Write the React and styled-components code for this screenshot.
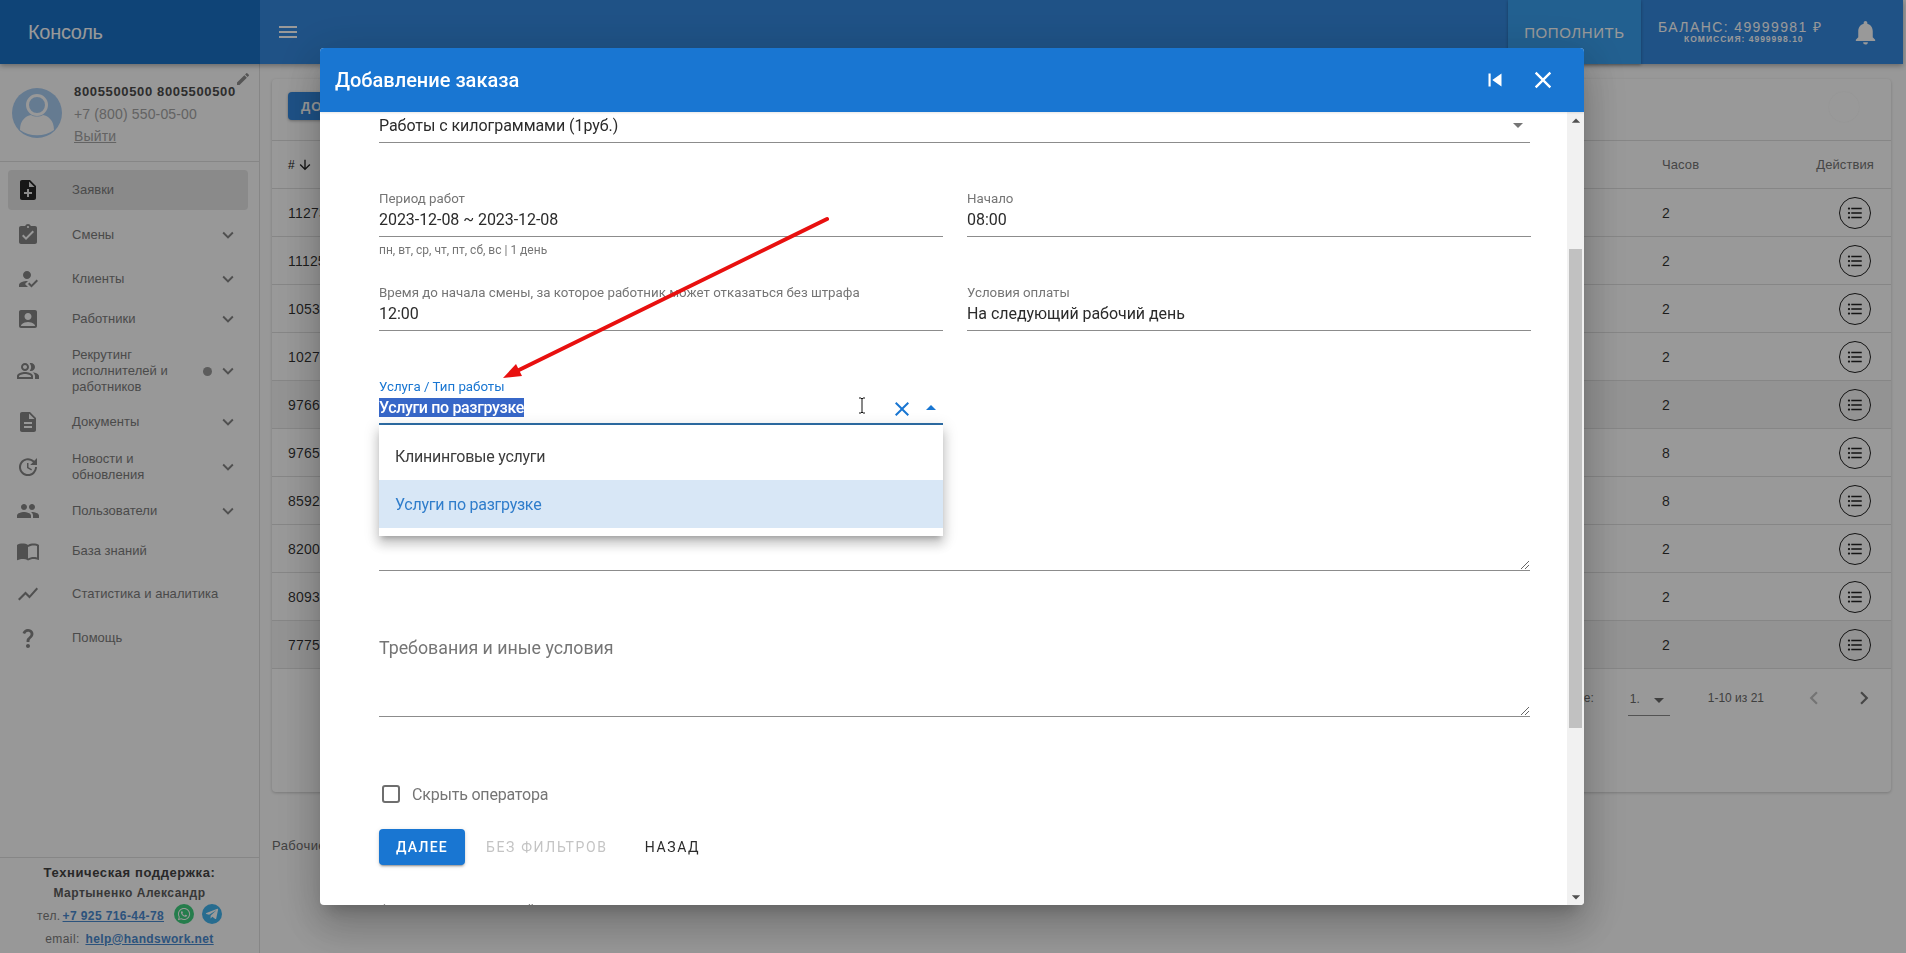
import React from 'react';
import styled, { createGlobalStyle } from 'styled-components';
import {
  MdNoteAdd,
  MdAssignmentTurnedIn,
  MdHowToReg,
  MdAccountBox,
  MdOutlinePeopleAlt,
  MdDescription,
  MdUpdate,
  MdPeople,
  MdImportContacts,
  MdShowChart,
  MdQuestionMark,
  MdExpandMore,
  MdEdit,
  MdMenu,
  MdNotifications,
  MdArrowDownward,
  MdFormatListBulleted,
  MdChevronLeft,
  MdChevronRight,
  MdClose,
  MdSkipPrevious,
  MdArrowDropDown,
  MdArrowDropUp,
} from 'react-icons/md';
import { FaWhatsapp, FaTelegramPlane } from 'react-icons/fa';

const GlobalStyle = createGlobalStyle`
  html, body {
    margin: 0;
    height: 100%;
    overflow: hidden;
    background: #fdfdfd;
    font-family: "Liberation Sans", Arial, sans-serif;
  }
  * {
    box-sizing: border-box;
  }
`;

const Shell = styled.div`
  width: 1903px;
  height: 953px;
  display: grid;
  grid-template-columns: 260px 1fr;
  grid-template-rows: 64px 1fr;
`;

const TopBar = styled.header`
  grid-column: 1 / 3;
  display: flex;
  align-items: stretch;
  background: #3489df;
  color: #fff;
  box-shadow: 0 2px 5px rgba(0, 0, 0, 0.3);
  z-index: 2;
`;

const Brand = styled.div`
  width: 260px;
  display: flex;
  align-items: center;
  padding-left: 28px;
  font-size: 20px;
  letter-spacing: -0.3px;
  background: #1a72c6;
`;

const MenuButton = styled.div`
  display: flex;
  align-items: center;
  margin-left: 16px;
  font-size: 24px;
  flex: 1;
`;

const TopUp = styled.div`
  width: 133px;
  display: flex;
  align-items: center;
  justify-content: center;
  font-size: 15px;
  letter-spacing: 0.6px;
  background: #39a0f0;
  box-shadow: 0 1px 3px rgba(0, 0, 0, 0.3);
`;

const Balance = styled.div`
  width: 190px;
  padding-left: 17px;
  display: flex;
  flex-direction: column;
  align-items: flex-start;
  justify-content: center;
  font-size: 14px;
  letter-spacing: 1.4px;
  line-height: 15px;
`;

const Commission = styled.div`
  align-self: flex-start;
  margin-left: 26px;
  font-size: 8.5px;
  font-weight: 700;
  line-height: 9px;
  letter-spacing: 1px;
`;

const BellBox = styled.div`
  width: 72px;
  padding-left: 20px;
  display: flex;
  align-items: center;
  font-size: 29px;
`;

const Sidebar = styled.aside`
  display: flex;
  flex-direction: column;
  border-right: 1px solid #e0e0e0;
  color: #7c7c7c;
`;

const Profile = styled.div`
  position: relative;
  height: 98px;
  padding: 17px 0 0 12px;
  display: flex;
  gap: 12px;
  border-bottom: 1px solid #e0e0e0;
`;

const Avatar = styled.svg`
  width: 50px;
  height: 50px;
  margin-top: 7px;
  flex: none;
`;

const ProfileText = styled.div`
  display: flex;
  flex-direction: column;
  font-size: 14px;
  line-height: 22px;
  letter-spacing: 0.15px;
  color: #a5a5a5;
`;

const ProfileName = styled.div`
  font-size: 13px;
  font-weight: 700;
  letter-spacing: 0.65px;
  color: #4c4c4c;
`;

const Logout = styled.span`
  text-decoration: underline;
`;

const Pencil = styled.div`
  position: absolute;
  right: 8px;
  top: 7px;
  font-size: 16px;
  color: #8e8e8e;
`;

const Nav = styled.nav`
  padding-top: 8px;
  display: flex;
  flex-direction: column;
`;

const NavItem = styled.div`
  height: ${(p) => p.$h}px;
  margin: 0 11px 0 8px;
  padding-left: 8px;
  display: flex;
  align-items: center;
  border-radius: 4px;
  font-size: 13px;
  line-height: 16px;
  letter-spacing: 0.03px;
  background: ${(p) => (p.$active ? '#e6e6e6' : 'transparent')};
`;

const NavIcon = styled.span`
  width: 24px;
  display: flex;
  justify-content: center;
  font-size: 24px;
  color: ${(p) => (p.$active ? '#262626' : '#858585')};
`;

const NavLabel = styled.span`
  margin-left: 32px;
  max-width: ${(p) => (p.$narrow ? '112px' : 'none')};
`;

const NavDot = styled.span`
  width: 9px;
  height: 9px;
  margin-left: auto;
  margin-right: 5px;
  border-radius: 50%;
  background: #9a9a9a;
`;

const NavChevron = styled.span`
  display: flex;
  margin-left: ${(p) => (p.$afterDot ? '0' : 'auto')};
  margin-right: 9px;
  font-size: 22px;
  color: #858585;
`;

const Support = styled.div`
  margin-top: auto;
  height: 96px;
  padding-top: 6px;
  border-top: 1px solid #e0e0e0;
  text-align: center;
  font-size: 12px;
  letter-spacing: 0.4px;
`;

const SupportTitle = styled.div`
  font-size: 13px;
  font-weight: 700;
  letter-spacing: 0.6px;
  line-height: 18px;
  color: #444;
`;

const SupportName = styled.div`
  font-size: 12px;
  font-weight: 700;
  letter-spacing: 0.5px;
  line-height: 22px;
  color: #5c5c5c;
`;

const SupportLine = styled.div`
  display: flex;
  align-items: center;
  justify-content: center;
  gap: 2px;
  height: 23px;
`;

const SupportLink = styled.a`
  color: #4a8ad0;
  font-weight: 700;
  text-decoration: underline;
`;

const Messenger = styled.span`
  width: 20px;
  height: 20px;
  margin-left: ${(p) => p.$gap}px;
  margin-top: -4px;
  border-radius: 50%;
  display: flex;
  align-items: center;
  justify-content: center;
  color: #fff;
  font-size: 14px;
  background: ${(p) => p.$bg};
`;

const Main = styled.main`
  padding: 15px 12px 0 12px;
  color: #444;
`;

const Card = styled.section`
  height: 713px;
  background: #fff;
  border-radius: 4px;
  box-shadow: 0 1px 3px rgba(0, 0, 0, 0.2);
`;

const CardBar = styled.div`
  height: 62px;
  padding: 13px 32px 0 16px;
  display: flex;
  justify-content: space-between;
  border-bottom: 1px solid #e0e0e0;
`;

const AddButton = styled.div`
  height: 28px;
  padding: 0 13px;
  display: flex;
  align-items: center;
  border-radius: 4px;
  background: #3288e0;
  color: #fff;
  font-size: 13px;
  font-weight: 700;
  letter-spacing: 1px;
  box-shadow: 0 1px 3px rgba(0, 0, 0, 0.3);
`;

const GhostCircle = styled.div`
  width: 30px;
  height: 30px;
  border-radius: 50%;
  background: #fff;
  box-shadow: 0 0 2px rgba(0, 0, 0, 0.05);
`;

const Row = styled.div`
  height: 48px;
  padding: 0 17px 0 16px;
  display: grid;
  grid-template-columns: 1374px 1fr auto;
  align-items: center;
  border-bottom: 1px solid #e0e0e0;
  font-size: 14px;
  letter-spacing: 0.2px;
  color: rgba(0, 0, 0, 0.82);
  background: ${(p) => (p.$shade ? '#f5f5f5' : 'transparent')};

  &:last-of-type {
    height: 50px;
  }
`;

const HeadRow = styled(Row)`
  font-size: 13px;
  letter-spacing: 0.1px;
  color: #757575;
`;

const SortCell = styled.div`
  display: flex;
  align-items: center;
  gap: 2px;
  font-size: 12px;
  color: #222;

  svg {
    font-size: 16px;
  }
`;

const ActionCircle = styled.div`
  width: 32px;
  height: 32px;
  margin-right: 3px;
  border: 1px solid #222;
  border-radius: 50%;
  display: flex;
  align-items: center;
  justify-content: center;
  font-size: 18px;
  color: #222;
`;

const Pager = styled.div`
  height: 58px;
  padding-right: 14px;
  display: flex;
  align-items: center;
  justify-content: flex-end;
  font-size: 12px;
  color: #6a6a6a;
`;

const PagerSelect = styled.div`
  width: 42px;
  height: 33px;
  margin: 0 38px 0 34px;
  padding: 9px 0 0 2px;
  border-bottom: 1px solid #8a8a8a;
  position: relative;
  top: 1px;
  display: flex;
  justify-content: space-between;

  svg {
    font-size: 24px;
    margin-top: -4px;
    margin-right: -1px;
  }
`;

const PagerArrow = styled.span`
  display: flex;
  margin-left: ${(p) => p.$gap}px;
  font-size: 26px;
  color: ${(p) => (p.$off ? '#c2c2c2' : '#757575')};
`;

const PageNote = styled.div`
  margin-top: 46px;
  font-size: 13px;
  letter-spacing: 0.4px;
  color: #6e6e6e;
`;

const Backdrop = styled.div`
  position: fixed;
  inset: 0;
  z-index: 10;
  padding: 48px 0 0 320px;
  background: rgba(0, 0, 0, 0.4);
  font-family: Roboto, "Liberation Sans", sans-serif;
`;

const Dialog = styled.div`
  width: 1264px;
  height: 857px;
  display: flex;
  flex-direction: column;
  overflow: hidden;
  border-radius: 4px;
  background: #fff;
  box-shadow: 0 11px 15px -7px rgba(0, 0, 0, 0.2),
    0 24px 38px 3px rgba(0, 0, 0, 0.14), 0 9px 46px 8px rgba(0, 0, 0, 0.12);
`;

const DialogHead = styled.div`
  height: 64px;
  flex: none;
  padding: 0 27px 0 15px;
  display: flex;
  align-items: center;
  background: #1976d2;
  color: #fff;
  font-size: 20px;
  font-weight: 500;
  box-shadow: 0 1px 2px rgba(0, 0, 0, 0.1);
  z-index: 1;
`;

const DialogTitle = styled.div`
  flex: 1;
`;

const HeadIcon = styled.span`
  display: flex;
  margin-left: ${(p) => p.$gap}px;
  font-size: ${(p) => p.$size}px;
`;

const DialogBody = styled.div`
  flex: 1;
  min-height: 0;
  display: flex;
`;

const Scroller = styled.div`
  flex: 1;
  min-width: 0;
  overflow: hidden;
  padding: 0 37px 0 59px;
`;

const ScrolledForm = styled.div`
  margin-top: -15px;
  display: flex;
  flex-direction: column;
`;

const FieldRow = styled.div`
  display: grid;
  grid-template-columns: 564px 564px;
  column-gap: 24px;
  margin-top: ${(p) => p.$mt || 0}px;
`;

const Field = styled.div`
  position: relative;
  height: 46px;
  display: flex;
  flex-direction: column;
  border-bottom: ${(p) => (p.$focus ? '2px solid #2f6fa8' : '1px solid #8c8c8c')};
`;

const FieldLabel = styled.div`
  height: 16px;
  font-size: 13.3px;
  line-height: 16px;
  color: ${(p) => (p.$focus ? '#1976d2' : '#757575')};
`;

const FieldValue = styled.div`
  height: 24px;
  display: flex;
  align-items: center;
  font-size: 16px;
  letter-spacing: -0.05px;
  color: #2b2b2b;
`;

const SelectedText = styled.span`
  background: #3767c8;
  color: #fff;
  font-weight: 500;
  letter-spacing: -0.35px;
  line-height: 19px;
`;

const FieldEnd = styled.span`
  position: absolute;
  right: ${(p) => p.$right}px;
  bottom: ${(p) => p.$bottom}px;
  display: flex;
  font-size: ${(p) => p.$size}px;
  color: ${(p) => p.$color};
`;

const Hint = styled.div`
  margin-top: 7px;
  font-size: 12px;
  line-height: 12px;
  color: #757575;
`;

const Menu = styled.ul`
  position: absolute;
  left: 0;
  right: 0;
  top: calc(100% + 2px);
  z-index: 3;
  margin: 0;
  padding: 7px 0 8px;
  list-style: none;
  background: #fff;
  box-shadow: 0 5px 5px -3px rgba(0, 0, 0, 0.2), 0 8px 10px 1px rgba(0, 0, 0, 0.14),
    0 3px 14px 2px rgba(0, 0, 0, 0.12);
`;

const MenuItem = styled.li`
  height: 48px;
  padding-left: 16px;
  display: flex;
  align-items: center;
  font-size: 16px;
  letter-spacing: -0.25px;
  color: ${(p) => (p.$selected ? '#2f7dcb' : '#3c3c3c')};
  background: ${(p) => (p.$selected ? '#d8e7f6' : 'transparent')};
`;

const TextArea = styled.div`
  position: relative;
  height: ${(p) => p.$h}px;
  margin-top: ${(p) => p.$mt}px;
  border-bottom: 1px solid #8c8c8c;
  font-size: 17.8px;
  line-height: 26px;
  color: #757575;
`;

const Resizer = styled.svg`
  position: absolute;
  right: 1px;
  bottom: 1px;
  width: 9px;
  height: 9px;
`;

const CheckRow = styled.div`
  height: 42px;
  margin-top: 56px;
  padding-left: 3px;
  display: flex;
  align-items: center;
  gap: 12px;
  font-size: 16px;
  letter-spacing: -0.2px;
  color: #757575;
`;

const CheckBox = styled.span`
  width: 18px;
  height: 18px;
  border: 2px solid #6e6e6e;
  border-radius: 3px;
`;

const Actions = styled.div`
  margin-top: 14px;
  display: flex;
  gap: 5px;
`;

const ActionButton = styled.div`
  height: 36px;
  padding: 0 ${(p) => (p.$primary ? 17 : 16)}px;
  display: flex;
  align-items: center;
  border-radius: 4px;
  font-size: 14px;
  font-weight: ${(p) => (p.$primary ? 500 : 400)};
  letter-spacing: ${(p) => (p.$primary ? 1.25 : 1.65)}px;
  color: ${(p) => (p.$disabled ? '#c4c4c4' : p.$primary ? '#fff' : '#2b2b2b')};
  background: ${(p) => (p.$primary ? '#1976d2' : 'transparent')};
  box-shadow: ${(p) =>
    p.$primary ? '0 3px 1px -2px rgba(0,0,0,.2), 0 2px 2px 0 rgba(0,0,0,.14), 0 1px 5px 0 rgba(0,0,0,.12)' : 'none'};
`;

const Collapse = styled.div`
  margin: 33px 0 0 -30px;
  display: flex;
  align-items: center;
  gap: 6px;
  font-size: 14px;
  line-height: 20px;
  color: #757575;

  svg {
    font-size: 24px;
  }
`;

const FakeScrollbar = styled.div`
  width: 17px;
  flex: none;
  display: flex;
  flex-direction: column;
  align-items: center;
  background: #f1f1f1;
`;

const ScrollArrow = styled.span`
  height: 17px;
  flex: none;
  display: flex;
  align-items: center;
  font-size: 20px;
  color: #505050;
`;

const ScrollTrack = styled.div`
  flex: 1;
  width: 100%;
  padding: 120px 2px 0;
`;

const ScrollThumb = styled.div`
  height: 479px;
  background: #c1c1c1;
`;

const Annotation = styled.svg`
  position: absolute;
  left: 0;
  top: 0;
  width: 1906px;
  height: 953px;
  pointer-events: none;
  z-index: 5;
`;

const navItems = [
  { label: 'Заявки', icon: MdNoteAdd, h: 40, active: true },
  { label: 'Смены', icon: MdAssignmentTurnedIn, h: 49, more: true },
  { label: 'Клиенты', icon: MdHowToReg, h: 40, more: true },
  { label: 'Работники', icon: MdAccountBox, h: 39, more: true },
  { label: 'Рекрутинг исполнителей и работников', icon: MdOutlinePeopleAlt, h: 66, more: true, dot: true, narrow: true },
  { label: 'Документы', icon: MdDescription, h: 36, more: true },
  { label: 'Новости и обновления', icon: MdUpdate, h: 54, more: true, narrow: true },
  { label: 'Пользователи', icon: MdPeople, h: 34, more: true },
  { label: 'База знаний', icon: MdImportContacts, h: 46 },
  { label: 'Статистика и аналитика', icon: MdShowChart, h: 40 },
  { label: 'Помощь', icon: MdQuestionMark, h: 48 },
];

const orders = [
  { id: '11273', hours: 2 },
  { id: '11125', hours: 2 },
  { id: '10530', hours: 2 },
  { id: '10270', hours: 2 },
  { id: '9766', hours: 2, shade: true },
  { id: '9765', hours: 8 },
  { id: '8592', hours: 8 },
  { id: '8200', hours: 2 },
  { id: '8093', hours: 2 },
  { id: '7775', hours: 2, shade: true },
];

const ResizeMark = () => (
  <Resizer viewBox="0 0 9 9">
    <path d="M9 1 1 9M9 5 5 9" stroke="#666" strokeWidth="1" fill="none" />
  </Resizer>
);

const App = () => {
  return (
    <>
      <GlobalStyle />
      <Shell>
        <TopBar>
          <Brand>Консоль</Brand>
          <MenuButton>
            <MdMenu />
          </MenuButton>
          <TopUp>ПОПОЛНИТЬ</TopUp>
          <Balance>
            <div>БАЛАНС: 49999981 ₽</div>
            <Commission>КОМИССИЯ: 4999998.10</Commission>
          </Balance>
          <BellBox>
            <MdNotifications />
          </BellBox>
        </TopBar>

        <Sidebar>
          <Profile>
            <Avatar viewBox="0 0 50 50">
              <circle cx="25" cy="25" r="25" fill="#a9cdf2" />
              <circle cx="25" cy="17" r="9.5" fill="none" stroke="#fdfdfd" strokeWidth="3" />
              <path
                d="M8 42c0-10 6-14 11-15 3 2 9 2 12 0 5 1 11 5 11 15-9 7-25 7-34 0z"
                fill="#fdfdfd"
              />
            </Avatar>
            <ProfileText>
              <ProfileName>8005500500 8005500500</ProfileName>
              <div>+7 (800) 550-05-00</div>
              <Logout>Выйти</Logout>
            </ProfileText>
            <Pencil>
              <MdEdit />
            </Pencil>
          </Profile>

          <Nav>
            {navItems.map((item) => (
              <NavItem key={item.label} $h={item.h} $active={item.active}>
                <NavIcon $active={item.active}>
                  <item.icon />
                </NavIcon>
                <NavLabel $narrow={item.narrow}>{item.label}</NavLabel>
                {item.dot && <NavDot />}
                {item.more && (
                  <NavChevron $afterDot={item.dot}>
                    <MdExpandMore />
                  </NavChevron>
                )}
              </NavItem>
            ))}
          </Nav>

          <Support>
            <SupportTitle>Техническая поддержка:</SupportTitle>
            <SupportName>Мартыненко Александр</SupportName>
            <SupportLine>
              тел.<SupportLink>+7 925 716-44-78</SupportLink>
              <Messenger $gap={8} $bg="#3fd07f">
                <FaWhatsapp />
              </Messenger>
              <Messenger $gap={6} $bg="#42b4ee">
                <FaTelegramPlane />
              </Messenger>
            </SupportLine>
            <SupportLine>
              email:&nbsp;<SupportLink>help@handswork.net</SupportLink>
            </SupportLine>
          </Support>
        </Sidebar>

        <Main>
          <Card>
            <CardBar>
              <AddButton>ДОБАВИТЬ ЗАКАЗ</AddButton>
              <GhostCircle />
            </CardBar>
            <HeadRow>
              <SortCell>
                # <MdArrowDownward />
              </SortCell>
              <div>Часов</div>
              <div>Действия</div>
            </HeadRow>
            {orders.map((order) => (
              <Row key={order.id} $shade={order.shade}>
                <div>{order.id}</div>
                <div>{order.hours}</div>
                <ActionCircle>
                  <MdFormatListBulleted />
                </ActionCircle>
              </Row>
            ))}
            <Pager>
              <div>Записей на странице:</div>
              <PagerSelect>
                1.
                <MdArrowDropDown />
              </PagerSelect>
              <div>1-10 из 21</div>
              <PagerArrow $gap={37} $off>
                <MdChevronLeft />
              </PagerArrow>
              <PagerArrow $gap={24}>
                <MdChevronRight />
              </PagerArrow>
            </Pager>
          </Card>
          <PageNote>Рабочие дни</PageNote>
        </Main>
      </Shell>

      <Backdrop>
        <Dialog>
          <DialogHead>
            <DialogTitle>Добавление заказа</DialogTitle>
            <HeadIcon $size={26}>
              <MdSkipPrevious />
            </HeadIcon>
            <HeadIcon $size={28} $gap={21}>
              <MdClose />
            </HeadIcon>
          </DialogHead>

          <DialogBody>
            <Scroller>
              <ScrolledForm>
                <Field>
                  <FieldLabel>Вид работ</FieldLabel>
                  <FieldValue>Работы с килограммами (1руб.)</FieldValue>
                  <FieldEnd $right={0} $bottom={5} $size={24} $color="#757575">
                    <MdArrowDropDown />
                  </FieldEnd>
                </Field>

                <FieldRow $mt={48}>
                  <div>
                    <Field>
                      <FieldLabel>Период работ</FieldLabel>
                      <FieldValue>2023-12-08 ~ 2023-12-08</FieldValue>
                    </Field>
                    <Hint>пн, вт, ср, чт, пт, сб, вс | 1 день</Hint>
                  </div>
                  <Field>
                    <FieldLabel>Начало</FieldLabel>
                    <FieldValue>08:00</FieldValue>
                  </Field>
                </FieldRow>

                <FieldRow $mt={29}>
                  <Field>
                    <FieldLabel>Время до начала смены, за которое работник может отказаться без штрафа</FieldLabel>
                    <FieldValue>12:00</FieldValue>
                  </Field>
                  <Field>
                    <FieldLabel>Условия оплаты</FieldLabel>
                    <FieldValue>На следующий рабочий день</FieldValue>
                  </Field>
                </FieldRow>

                <FieldRow $mt={48}>
                  <Field $focus>
                    <FieldLabel $focus>Услуга / Тип работы</FieldLabel>
                    <FieldValue>
                      <SelectedText>Услуги по разгрузке</SelectedText>
                    </FieldValue>
                    <FieldEnd $right={29} $bottom={2} $size={24} $color="#1976d2">
                      <MdClose />
                    </FieldEnd>
                    <FieldEnd $right={0} $bottom={3} $size={24} $color="#1976d2">
                      <MdArrowDropUp />
                    </FieldEnd>
                    <Menu>
                      <MenuItem>Клининговые услуги</MenuItem>
                      <MenuItem $selected>Услуги по разгрузке</MenuItem>
                    </Menu>
                  </Field>
                </FieldRow>

                <TextArea $mt={40} $h={106}>
                  <ResizeMark />
                </TextArea>
                <TextArea $mt={64} $h={82}>
                  Требования и иные условия
                  <ResizeMark />
                </TextArea>

                <CheckRow>
                  <CheckBox />
                  Скрыть оператора
                </CheckRow>

                <Actions>
                  <ActionButton $primary>ДАЛЕЕ</ActionButton>
                  <ActionButton $disabled>БЕЗ ФИЛЬТРОВ</ActionButton>
                  <ActionButton>НАЗАД</ActionButton>
                </Actions>

                <Collapse>
                  <MdExpandMore />
                  Фильтры исполнителей
                </Collapse>
              </ScrolledForm>
            </Scroller>

            <FakeScrollbar>
              <ScrollArrow>
                <MdArrowDropUp />
              </ScrollArrow>
              <ScrollTrack>
                <ScrollThumb />
              </ScrollTrack>
              <ScrollArrow>
                <MdArrowDropDown />
              </ScrollArrow>
            </FakeScrollbar>
          </DialogBody>
        </Dialog>

        <Annotation viewBox="0 0 1906 953">
          <path d="M827 219 519 370" stroke="#e8100f" strokeWidth="4" strokeLinecap="round" fill="none" />
          <path d="M503 378 516 364 522 376z" fill="#e8100f" />
          <path
            d="M859 398h2l1 1 1-1h2M862 399v13M859 413h2l1-1 1 1h2"
            stroke="#111"
            strokeWidth="1"
            fill="none"
          />
        </Annotation>
      </Backdrop>
    </>
  );
};

export default App;
